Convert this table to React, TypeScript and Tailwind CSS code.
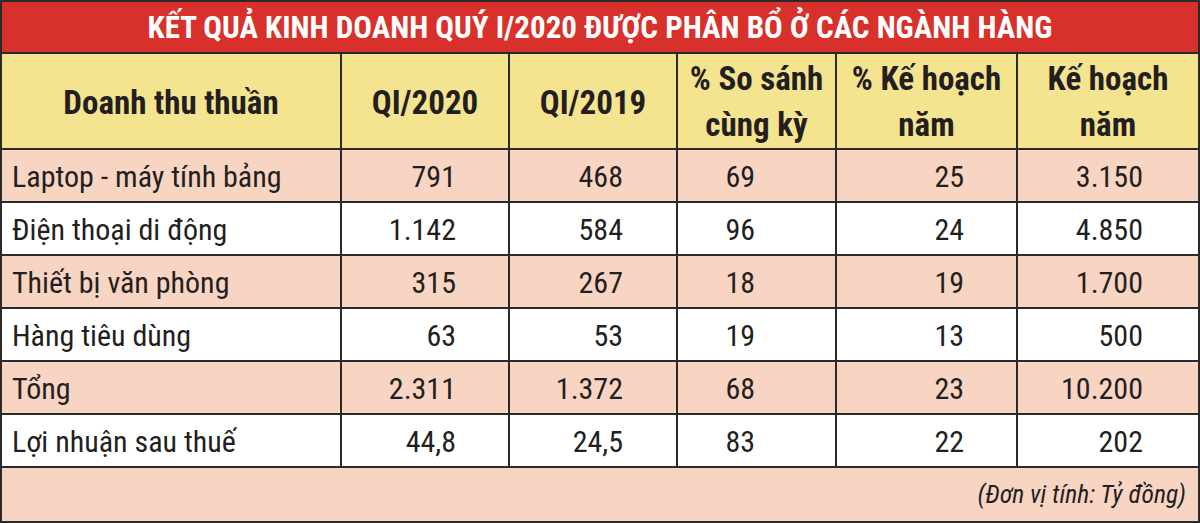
import React from "react";

const rows = [
	["Laptop - máy tính bảng", "791", "468", "69", "25", "3.150"],
	["Điện thoại di động", "1.142", "584", "96", "24", "4.850"],
	["Thiết bị văn phòng", "315", "267", "18", "19", "1.700"],
	["Hàng tiêu dùng", "63", "53", "19", "13", "500"],
	["Tổng", "2.311", "1.372", "68", "23", "10.200"],
	["Lợi nhuận sau thuế", "44,8", "24,5", "83", "22", "202"],
];

const font = {
	fontFamily:
		"'Liberation Sans Narrow', 'Roboto Condensed', 'DejaVu Sans Condensed', 'Open Sans', sans-serif",
	fontStretch: "condensed",
};

const gridCols = "grid grid-cols-[340px_168px_168px_159px_181px_180px]";
const padRight = ["", "pr-[52px]", "pr-[53px]", "pr-[80px]", "pr-[52px]", "pr-[55px]"];

export default function App() {
	return (
		<div
			className="w-[1200px] h-[523px] border-2 border-[#2b2a29] text-[#231f20] bg-white flex flex-col overflow-hidden"
			style={font}
		>
			<div className="h-[52px] bg-[#d8302b] border-b-2 border-[#2b2a29] flex items-center justify-center">
				<h1 className="text-white font-bold text-[31px] pt-[2px]">
					KẾT QUẢ KINH DOANH QUÝ I/2020 ĐƯỢC PHÂN BỔ Ở CÁC NGÀNH HÀNG
				</h1>
			</div>

			<div className={`${gridCols} h-[96px] bg-[#f5e48f] border-b-2 border-[#2b2a29] font-bold text-[33px] leading-[46px]`}>
				<div className="border-r-2 border-[#2b2a29] flex items-center justify-center pt-[4px]">Doanh thu thuần</div>
				<div className="border-r-2 border-[#2b2a29] flex items-center justify-center pt-[4px]">QI/2020</div>
				<div className="border-r-2 border-[#2b2a29] flex items-center justify-center pt-[4px]">QI/2019</div>
				<div className="border-r-2 border-[#2b2a29] flex items-center justify-center text-center pt-[2px]">
					% So sánh
					<br />
					cùng kỳ
				</div>
				<div className="border-r-2 border-[#2b2a29] flex items-center justify-center text-center pt-[2px]">
					% Kế hoạch
					<br />
					năm
				</div>
				<div className="flex items-center justify-center text-center pt-[2px]">
					Kế hoạch
					<br />
					năm
				</div>
			</div>

			{rows.map((r, i) => (
				<div
					key={r[0]}
					className={`${gridCols} h-[53px] border-b-2 border-[#2b2a29] text-[30px] ${
						i % 2 === 0 ? "bg-[#f8d4c3]" : "bg-white"
					}`}
				>
					{r.map((c, j) => (
						<div
							key={j}
							className={`flex items-center pt-[2px] ${j < 5 ? "border-r-2 border-[#2b2a29]" : ""} ${
								j === 0 ? "pl-[10px]" : `justify-end ${padRight[j]}`
							}`}
						>
							{c}
						</div>
					))}
				</div>
			))}

			<div className="flex-1 bg-[#f8d4c3] flex items-center justify-end pr-[12px] italic text-[25.5px]">
				(Đơn vị tính: Tỷ đồng)
			</div>
		</div>
	);
}
